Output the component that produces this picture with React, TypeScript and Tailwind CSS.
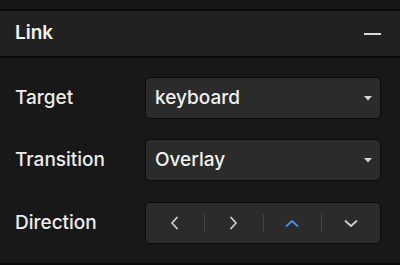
import React from "react";

const font = { fontFamily: '"Inter", "Liberation Sans", sans-serif' };

function Caret() {
  return (
    <svg width="8" height="5" viewBox="0 0 8 5" className="shrink-0">
      <path d="M0 0 H8 L4 4.5 Z" fill="#d6d6d6" />
    </svg>
  );
}

function Select({ value }: { value: string }) {
  return (
    <div className="flex h-[42px] w-[236px] items-center justify-between rounded-[5px] border border-[#0b0b0b] bg-[#2b2b2b] pl-[9px] pr-[8px]">
      <span className="text-[19px] font-medium text-[#f0f0f0]">{value}</span>
      <Caret />
    </div>
  );
}

function Chevron({ d, color, w, h }: { d: string; color: string; w: number; h: number }) {
  return (
    <svg width={w} height={h} viewBox={`0 0 ${w} ${h}`}>
      <path d={d} fill="none" stroke={color} strokeWidth="1.8" strokeLinecap="round" strokeLinejoin="round" />
    </svg>
  );
}

export default function App() {
  const row = "flex h-[42px] items-center justify-between";
  const label = "text-[19px] font-medium text-[#ececec]";
  return (
    <div style={font} className="flex h-[265px] w-[400px] flex-col bg-[#181818]">
      <div className="h-[9px] bg-[#171717]" />
      <div className="h-[2px] bg-[#0a0a0a]" />
      <div className="flex h-[45px] items-center justify-between bg-[#212121] pl-[15px] pr-[19px]">
        <span className="text-[19px] font-semibold text-[#f2f2f2]">Link</span>
        <div className="h-[2px] w-[17px] bg-[#d8d8d8]" />
      </div>
      <div className="h-[2px] bg-[#0a0a0a]" />
      <div className="flex flex-1 flex-col gap-[20px] pl-[15px] pr-[19px] pt-[19px]">
        <div className={row}>
          <span className={label}>Target</span>
          <Select value="keyboard" />
        </div>
        <div className={row}>
          <span className={label}>Transition</span>
          <Select value="Overlay" />
        </div>
        <div className={`${row} mt-[1px]`}>
          <span className={label}>Direction</span>
          <div className="flex h-[42px] w-[236px] items-center rounded-[5px] border border-[#0b0b0b] bg-[#2b2b2b]">
            <div className="flex flex-1 items-center justify-center">
              <Chevron w={9} h={14} d="M7 1.5 L2 7 L7 12.5" color="#cfcfcf" />
            </div>
            <div className="h-[18px] w-px bg-[#444]" />
            <div className="flex flex-1 items-center justify-center">
              <Chevron w={9} h={14} d="M2 1.5 L7 7 L2 12.5" color="#cfcfcf" />
            </div>
            <div className="h-[18px] w-px bg-[#444]" />
            <div className="flex flex-1 items-center justify-center">
              <Chevron w={14} h={9} d="M1.5 7 L7 2 L12.5 7" color="#4a90e2" />
            </div>
            <div className="h-[18px] w-px bg-[#444]" />
            <div className="flex flex-1 items-center justify-center">
              <Chevron w={14} h={9} d="M1.5 2 L7 7 L12.5 2" color="#cfcfcf" />
            </div>
          </div>
        </div>
      </div>
      <div className="h-[2px] bg-[#0a0a0a]" />
    </div>
  );
}
